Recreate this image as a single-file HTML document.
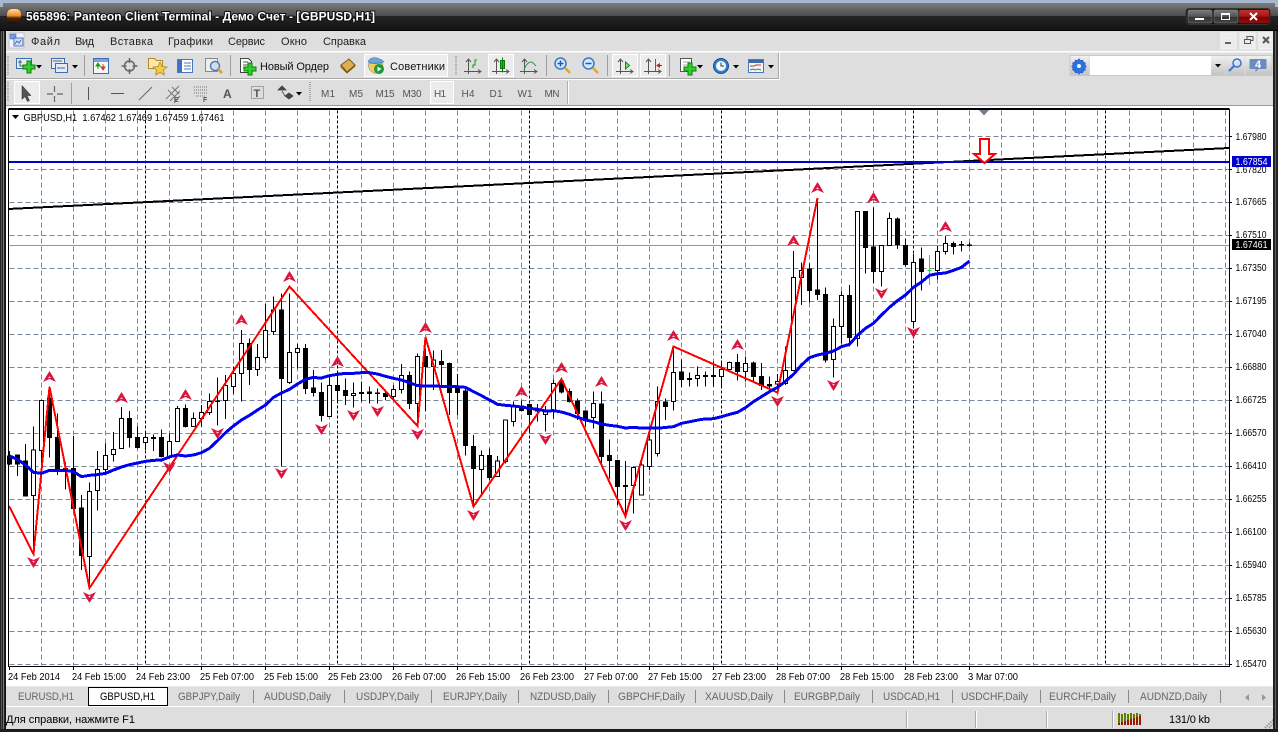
<!DOCTYPE html>
<html><head><meta charset="utf-8"><title>Panteon Client Terminal</title>
<style>
html,body{margin:0;padding:0;background:#dedede;overflow:hidden}
svg{display:block;position:absolute;left:0;top:0}
text{font-family:"Liberation Sans","Noto Sans CJK SC",sans-serif;font-size:11px;white-space:pre}
.m{fill:#222;font-size:11px}
.a{fill:#000;font-size:10px}
.t{fill:#666;font-size:11px}
.f{fill:#555;font-size:10px;text-anchor:middle}
.c{shape-rendering:crispEdges}
.wk{fill:none;stroke:#000;stroke-width:3}
.bk{fill:#000;stroke:#000;stroke-width:3}
.wh{fill:#fff;stroke:#000;stroke-width:3}
.ma{fill:none;stroke:#0000f0;stroke-width:9;stroke-linejoin:round;shape-rendering:crispEdges}
</style></head><body>
<svg width="1278" height="732" viewBox="0 0 1278 732" xmlns="http://www.w3.org/2000/svg">
<defs>
<linearGradient id="tb" x1="0" y1="0" x2="0" y2="1"><stop offset="0" stop-color="#7c7c7c"/><stop offset="1" stop-color="#4c4c4c"/></linearGradient>
<linearGradient id="tb2" x1="0" y1="0" x2="0" y2="1"><stop offset="0" stop-color="#242424"/><stop offset="1" stop-color="#141414"/></linearGradient>
<linearGradient id="org" x1="0" y1="0" x2="0" y2="1"><stop offset="0" stop-color="#ffe0a0"/><stop offset=".45" stop-color="#f08a20"/><stop offset=".6" stop-color="#552200"/><stop offset="1" stop-color="#111"/></linearGradient>
<linearGradient id="btn" x1="0" y1="0" x2="0" y2="1"><stop offset="0" stop-color="#7a7a7a"/><stop offset=".5" stop-color="#555"/><stop offset=".55" stop-color="#333"/><stop offset="1" stop-color="#444"/></linearGradient>
<linearGradient id="red" x1="0" y1="0" x2="0" y2="1"><stop offset="0" stop-color="#c03030"/><stop offset=".5" stop-color="#a81515"/><stop offset=".55" stop-color="#7a0000"/><stop offset="1" stop-color="#901010"/></linearGradient>
<linearGradient id="sb" x1="0" y1="0" x2="0" y2="1"><stop offset="0" stop-color="#f0f0f0"/><stop offset="1" stop-color="#c4c4c4"/></linearGradient>
<path id="u" d="M0-6L2.500-2L6.500 5L0 2L-6.500 5L-2.500-2zM0-.8L-1.500 1.300L0 .8L1.500 1.300z" fill="#dc143c" fill-rule="evenodd"/>
<path id="d" d="M0 6L2.500 2L6.500-5L0-2L-6.500-5L-2.500 2zM0 .8L-1.500-1.300L0-.8L1.500-1.300z" fill="#dc143c" fill-rule="evenodd"/>
<path id="car" d="M0 0h6l-3 3.500z" fill="#000"/>
<path id="pl" d="M-2-6h4v4h4v4h-4v4h-4v-4h-4v-4h4z" fill="#2fd02f" stroke="#0d7d0d" stroke-width="1"/>
</defs>

<!-- window base -->
<rect width="1278" height="732" fill="#dedede"/>
<rect width="1278" height="3" fill="#a6b8d0"/>
<rect y="3" width="1278" height="13" fill="url(#tb)"/>
<rect y="16" width="1278" height="14" fill="url(#tb2)"/>
<rect y="30" width="1278" height="1" fill="#000"/>
<rect x="0" y="0" width="3" height="7" fill="#a6b8d0"/>
<rect x="1275" y="0" width="3" height="7" fill="#a6b8d0"/>

<!-- app icon + title -->
<rect x="7" y="9" width="14" height="15" rx="5" fill="url(#org)"/>
<text x="26" y="20.500" textLength="349" font-weight="700" style="font-size:12px;fill:#fff;stroke:#111;stroke-width:2px;paint-order:stroke;font-weight:700">565896: Panteon Client Terminal - Демо Счет - [GBPUSD,H1]</text>

<!-- window buttons -->
<rect x="1186" y="8.500" width="84" height="16" rx="3" fill="#1a1a1a" stroke="#333"/>
<rect x="1188" y="10" width="24" height="13" rx="1.500" fill="url(#btn)" stroke="#8a8a8a" stroke-width=".5"/>
<rect x="1214" y="10" width="24" height="13" rx="1.500" fill="url(#btn)" stroke="#8a8a8a" stroke-width=".5"/>
<rect x="1239" y="10" width="30" height="13" rx="1.500" fill="url(#red)"/>
<rect x="1195" y="18" width="9" height="2" fill="#fff"/>
<rect x="1221.500" y="13.500" width="8" height="6" fill="none" stroke="#fff" stroke-width="1"/><rect x="1221" y="13" width="9" height="2" fill="#fff"/>
<path d="M1250 13l7 7m0-7l-7 7" stroke="#fff" stroke-width="2" fill="none"/>

<!-- menu bar -->
<rect y="31" width="1278" height="20" fill="#dedede"/>
<rect x="9" y="33" width="15" height="15" fill="#eef4ff" stroke="#9aa8c0" stroke-width=".5"/>
<rect x="10" y="34" width="6" height="5" fill="#7d9ad6" stroke="#3a5aa8" stroke-width=".5"/><rect x="14" y="38" width="9" height="8" fill="#cfdcf5" stroke="#3a5aa8" stroke-width=".8"/><path d="M15 44l2-3 2 2 2-3" stroke="#3a5aa8" fill="none" stroke-width=".8"/>
<text class="m" x="31" y="45" textLength="29">Файл</text>
<text class="m" x="75" y="45" textLength="19">Вид</text>
<text class="m" x="110" y="45" textLength="43">Вставка</text>
<text class="m" x="168" y="45" textLength="45">Графики</text>
<text class="m" x="228" y="45" textLength="37">Сервис</text>
<text class="m" x="281" y="45" textLength="26">Окно</text>
<text class="m" x="323" y="45" textLength="43">Справка</text>
<g>
<rect x="1221" y="33" width="15" height="16" fill="#ececec" stroke="#f4f4f4"/><rect x="1225" y="42" width="6" height="2" fill="#666"/>
<rect x="1240" y="33" width="15" height="16" fill="#ececec" stroke="#f4f4f4"/><path d="M1244.500 39.500h6v4h-6zM1247 39v-2.500h6v4h-2" fill="none" stroke="#555"/>
<rect x="1259" y="33" width="15" height="16" fill="#ececec" stroke="#f4f4f4"/><path d="M1263 37l6 6m0-6l-6 6" stroke="#555" stroke-width="2"/>
</g>
<rect y="51" width="1278" height="1.500" fill="#fff"/>

<!-- toolbar 1 -->
<rect x="3" y="53" width="776" height="25" fill="#dedede" stroke="#fff" stroke-width="0"/>
<path d="M3 78.500H778.500V53" fill="none" stroke="#a8a8a8"/><path d="M3 79.500H779.500V53" fill="none" stroke="#fff"/>
<path d="M8 56v19" stroke="#aaa" stroke-width="2" stroke-dasharray="1 1"/>
<path d="M456 56v19" stroke="#aaa" stroke-width="2" stroke-dasharray="1 1"/>
<path d="M84.500 55v21M230.500 55v21M546.500 55v21M607.500 55v21M669.500 55v21" stroke="#a0a0a0" fill="none"/>

<!-- new chart -->
<g>
<rect x="16.500" y="58.500" width="15" height="10" fill="#e4ecfa" stroke="#3c6cb4"/><path d="M20 60v6h8M18 62h4" stroke="#333" fill="none" stroke-width=".8"/>
<use href="#pl" x="29" y="67"/><use href="#car" x="36" y="65"/>
<rect x="51.500" y="58.500" width="13" height="10" fill="#e4ecfa" stroke="#3c6cb4"/><rect x="55.500" y="63.500" width="12" height="9" fill="#e4ecfa" stroke="#3c6cb4"/><path d="M57 68h8M53 61h9" stroke="#333" stroke-width=".8"/>
<use href="#car" x="72" y="65"/>
<!-- market watch -->
<rect x="93.500" y="58.500" width="15" height="15" fill="#f5f7fb" stroke="#3c6cb4"/><rect x="94" y="59" width="14" height="3" fill="#7fa2d8"/><path d="M98 69v-4M96 66l2-3 2 3z" fill="#1a9a1a" stroke="#1a9a1a"/><path d="M103 64v4M101 67l2 3 2-3z" fill="#d04020" stroke="#d04020"/>
<!-- crosshair -->
<circle cx="129.500" cy="66" r="5" fill="none" stroke="#666" stroke-width="1.500"/><path d="M129.500 58v5m0 6v5M121.500 66h5m6 0h5" stroke="#666" stroke-width="1.500"/>
<!-- star folder -->
<path d="M148.500 58.500h6l2 2h6v8h-14z" fill="#ffe9a8" stroke="#b08a30"/><path d="M160 62l2 4.500 5 .5-3.500 3 1 5-4.500-2.500-4.500 2.500 1-5-3.500-3 5-.5z" fill="#f5cc40" stroke="#b08a30" stroke-width=".8"/>
<!-- terminal -->
<rect x="177.500" y="59.500" width="15" height="13" fill="#fff" stroke="#4a78c0"/><rect x="178" y="60" width="4" height="12" fill="#3f72c8"/><path d="M184 63h7M184 66h7M184 69h7" stroke="#4a78c0"/>
<!-- tester -->
<rect x="205.500" y="58.500" width="12" height="13" fill="#eee" stroke="#8a8a8a"/><circle cx="215" cy="66" r="4.500" fill="#cfe0f5" stroke="#5a7ab0" stroke-width="1.500"/><path d="M218 69l4 4" stroke="#d4a030" stroke-width="2.500"/>
<!-- new order -->
<path d="M240.500 58.500h8l3 3v11h-11z" fill="#fff" stroke="#444"/><path d="M243 62h5M243 65h6M243 68h3" stroke="#555"/>
<use href="#pl" x="250" y="69"/>
<text x="260" y="70" textLength="69" style="font-size:11px;fill:#111">Новый Ордер</text>
<!-- book -->
<path d="M341 65l8-6 6 6-8 7z" fill="#e0b050" stroke="#7a5a1a"/><path d="M341 65v2l6 6 8-7v-1" fill="none" stroke="#7a5a1a"/>
<!-- experts pressed -->
<rect x="364.500" y="54.500" width="83" height="22" fill="#ececec" stroke="#fff"/>
<path d="M368 62c1-4 6-5 9-4s6 2 7 4c-3 1-13 2-16 0z" fill="#6aa6d8" stroke="#3a6a9a" stroke-width=".5"/><path d="M369 63c-1 4 0 8 5 10 4 1 8-1 9-4 0-2 0-4-1-6-4 1-9 1-13 0z" fill="#f3cb62" stroke="#8a7030" stroke-width=".5"/>
<circle cx="379" cy="69" r="5" fill="#1b9a3b"/><path d="M377.500 66.500v5l4-2.500z" fill="#fff"/>
<text x="390" y="70" textLength="55" style="font-size:11px;fill:#111">Советники</text>

<!-- chart type -->
<g fill="none" stroke="#555" stroke-width="1">
<path d="M468.500 60v14M466 62l2.500-3 2.500 3M464 71.500h16M478 69.500l3 2-3 2"/>
<path d="M473 68v-3h2v-5h2" stroke="#0a9a0a"/>
</g>
<rect x="488.500" y="54.500" width="25" height="22" fill="#ececec" stroke="#fff"/>
<g fill="none" stroke="#555"><path d="M496.500 60v14M494 62l2.500-3 2.500 3M492 71.500h16M506 69.500l3 2-3 2"/></g>
<rect x="500.500" y="60.500" width="4" height="8" fill="#1ac21a" stroke="#0a7a0a"/><path d="M502.500 57.500v15" stroke="#0a7a0a"/>
<g fill="none" stroke="#555"><path d="M524.500 60v14M522 62l2.500-3 2.500 3M520 71.500h16M534 69.500l3 2-3 2"/></g>
<path d="M524 70c2-6 5-8 7-8s3 2 5 4" fill="none" stroke="#2a9a4a" stroke-width="1"/>

<!-- zoom -->
<g>
<circle cx="560.500" cy="63.500" r="5.500" fill="#d4e6fa" stroke="#3a78c8" stroke-width="1.500"/><path d="M557.500 63.500h6M560.500 60.500v6" stroke="#2a5a9a" stroke-width="1.500"/><path d="M565 68l5 5" stroke="#d8a830" stroke-width="2.500"/>
<circle cx="588.500" cy="63.500" r="5.500" fill="#d4e6fa" stroke="#3a78c8" stroke-width="1.500"/><path d="M585.500 63.500h6" stroke="#2a5a9a" stroke-width="1.500"/><path d="M593 68l5 5" stroke="#d8a830" stroke-width="2.500"/>
</g>
<!-- autoscroll / shift -->
<rect x="612.500" y="54.500" width="25" height="22" fill="#ececec" stroke="#fff"/>
<rect x="640.500" y="54.500" width="25" height="22" fill="#ececec" stroke="#fff"/>
<g fill="none" stroke="#555"><path d="M620.500 60v14M618 62l2.500-3 2.500 3M616 71.500h16M630 69.500l3 2-3 2"/><path d="M648.500 60v14M646 62l2.500-3 2.500 3M644 71.500h16M658 69.500l3 2-3 2"/></g>
<path d="M625.500 62v7l4-3.500z" fill="#8ce08c" stroke="#0a8a0a"/>
<path d="M655.500 59v12" stroke="#3a6aa8" stroke-width="1"/><path d="M656 65.500l4-2.500v2h2v1h-2v2z" fill="#c02020"/>

<!-- 679 group -->
<rect x="680.500" y="58.500" width="11" height="13" fill="#fff" stroke="#555"/><path d="M683 62h7M683 65h7" stroke="#aaa"/>
<use href="#pl" x="690" y="69"/><use href="#car" x="697" y="65"/>
<circle cx="721" cy="66" r="7.500" fill="#2f7fd0" stroke="#16508f"/><circle cx="721" cy="66" r="5" fill="#f4f8ff"/><path d="M721 62.500V66h3" stroke="#333" fill="none"/><use href="#car" x="733" y="65"/>
<rect x="748.500" y="59.500" width="15" height="13" fill="#f4f6fa" stroke="#4a78c0"/><rect x="749" y="60" width="14" height="3" fill="#3a6ab0"/><path d="M750 66h4l2-1h5" stroke="#c04020" fill="none"/><path d="M750 70l3-1 2 1 3-1 3 1" stroke="#2a9a2a" fill="none"/><use href="#car" x="768" y="65"/>
</g>

<!-- right search -->
<rect x="1070" y="55.500" width="202" height="20" fill="#dcdcdc" stroke="#c8c8c8"/>
<rect x="1070.500" y="56" width="19" height="19" fill="url(#sb)"/>
<path d="M1079 58.500l1.500 2 2-.5 1 2 2 1-.5 2 1.500 1.500-1.500 1.500.5 2-2 1-1 2-2-.5-1.500 2-1.500-2-2 .5-1-2-2-1 .5-2-1.500-1.500 1.500-1.500-.5-2 2-1 1-2 2 .5z" fill="#2f6fe0" stroke="#1a4ab0" stroke-width=".5"/><circle cx="1079" cy="66" r="2" fill="#dff"/>
<rect x="1090" y="56" width="121" height="19" fill="#fff"/>
<rect x="1211" y="56" width="14" height="19" fill="url(#sb)"/><use href="#car" x="1215" y="64"/>
<rect x="1225.500" y="56" width="19" height="19" fill="url(#sb)"/>
<circle cx="1237" cy="63" r="4" fill="none" stroke="#3a72d8" stroke-width="1.500"/><path d="M1234 66l-5 5" stroke="#3a72d8" stroke-width="2"/>
<rect x="1245.500" y="56" width="26" height="19" fill="url(#sb)"/>
<path d="M1250.500 59h15a1 1 0 0 1 1 1v8a1 1 0 0 1-1 1h-7l-3 3v-3h-5a1 1 0 0 1-1-1v-8a1 1 0 0 1 1-1z" fill="#6c8cc0"/>
<text x="1255" y="68" style="font-size:11px;font-weight:700;fill:#fff">4</text>

<!-- toolbar 2 -->
<path d="M3 105.500H1278" stroke="#9c9c9c"/>
<path d="M568.500 81v23" stroke="#fff"/><path d="M567.500 81v23" stroke="#b0b0b0"/>
<path d="M8 82v20M310 82v20" stroke="#aaa" stroke-width="2" stroke-dasharray="1 1"/>
<rect x="14.500" y="81.500" width="25" height="22" fill="#ececec" stroke="#fff"/>
<path d="M22 85.500v14l3-3 2.500 5 2-1-2.500-5h4z" fill="#555" stroke="#222" stroke-width=".5"/>
<path d="M54.500 86v6m0 4v6M47 94h6m4 0h6" stroke="#666" stroke-width="1.200" fill="none"/>
<path d="M71.500 83v21" stroke="#a0a0a0"/>
<path d="M88.500 87v13" stroke="#555"/><path d="M111 93.500h13" stroke="#555"/><path d="M139 100l13-13" stroke="#666"/>
<path d="M166 99l13-13M170 101l10-10M174 103l6-7M168 90l8 8M172 87l7 7" stroke="#777" fill="none" stroke-width="1"/><text x="174" y="102" style="font-size:7px;font-weight:700;fill:#555">E</text>
<path d="M194 87h14M194 90h14M194 93h14M196 96h10" stroke="#777" stroke-dasharray="1 1"/><text x="203" y="102" style="font-size:7px;font-weight:700;fill:#555">F</text>
<text x="223" y="98" style="font-size:12px;font-weight:700;fill:#555">A</text>
<rect x="251.500" y="86.500" width="12" height="12" fill="none" stroke="#666" stroke-dasharray="1 1"/><text x="253.500" y="97" style="font-size:11px;font-weight:700;fill:#555">T</text>
<path d="M278 90l4-4 4 4zM285 96l4-3 4 3-4 3zM282 91l3 5" fill="#444" stroke="#444" stroke-width=".8"/><use href="#car" x="296" y="92"/>
<text class="f" x="328" y="97" textLength="14">M1</text>
<text class="f" x="356" y="97" textLength="14">M5</text>
<text class="f" x="385" y="97" textLength="19">M15</text>
<text class="f" x="412" y="97" textLength="19">M30</text>
<rect x="430.500" y="81.500" width="23" height="22" fill="#ececec" stroke="#fff"/>
<text class="f" x="440" y="97" textLength="12">H1</text>
<text class="f" x="468" y="97" textLength="13">H4</text>
<text class="f" x="496" y="97" textLength="13">D1</text>
<text class="f" x="525" y="97" textLength="15">W1</text>
<text class="f" x="552" y="97" textLength="15">MN</text>

<!-- chart -->
<rect x="5" y="106" width="1268" height="581" fill="#fff"/>
<g transform="translate(.5 .5)" fill="none" class="c">
<path stroke="#778899" stroke-dasharray="5 3" d="M9 136H1229M9 169H1229M9 202H1229M9 235H1229M9 268H1229M9 301H1229M9 334H1229M9 367H1229M9 400H1229M9 433H1229M9 466H1229M9 499H1229M9 532H1229M9 565H1229M9 598H1229M9 631H1229M9 664H1229"/>
<path stroke="#778899" stroke-dasharray="5 3" d="M41 110V665M73 110V665M105 110V665M137 110V665M169 110V665M201 110V665M233 110V665M265 110V665M297 110V665M329 110V665M361 110V665M393 110V665M425 110V665M457 110V665M489 110V665M521 110V665M553 110V665M585 110V665M617 110V665M649 110V665M681 110V665M713 110V665M745 110V665M777 110V665M809 110V665M841 110V665M873 110V665M905 110V665M937 110V665M969 110V665M1001 110V665M1033 110V665M1065 110V665M1097 110V665M1129 110V665M1161 110V665M1193 110V665M1225 110V665"/>
<path stroke="#000" stroke-dasharray="3 2" d="M145 110V665M337 110V665M529 110V665M721 110V665M913 110V665M1105 110V665"/>
<path stroke="#8a96a2" d="M9 245H1229"/>
</g>

<!-- candles -->
<g class="c" transform="translate(.17 370) scale(.33333)">
<path class="wk" d="M28 243V285M52 255V318M76 222V380M100 170V550M124 91V310M148 50V262M172 130V315M196 278V358M220 198V415M244 375V600M268 337V655M292 243V422M316 220V310M340 186V275M364 111V236M388 123V233M412 170V235M436 185V240M460 193V243"/>
<path class="bk" d="M22 258H34V282H22zM46 255H58V282H46zM70 273H82V378H70zM142 84H154V203H142zM166 203H178V300H166zM190 295H202V305H190zM214 295H226V415H214zM238 414H250V557H238zM382 145H394V203H382zM406 203H418V233H406zM454 203H466V205H454z"/>
<path class="wh" d="M94 240H106V376H94zM118 91H130V242H118zM262 364H274V560H262zM286 298H298V362H286zM310 256H322V298H310zM334 238H346V253H334zM358 145H370V236H358zM430 203H442V217H430z"/>
</g>
<g class="c" transform="translate(160.17 270) scale(.33333)">
<path class="wk" d="M4 478V563M28 490V565M52 408V515M76 403V472M100 428V470M124 405V470M148 370V435M172 322V467M196 315V447M220 290V372M244 180V395M268 205V345M292 222V318M316 102V268M340 80V195M364 70V590M388 70V342M412 222V296M436 222V372M460 300V380"/>
<path class="bk" d="M-2 503H10V560H-2zM70 415H82V470H70zM166 393H178V395H166zM262 220H274V299H262zM358 120H370V326H358zM430 235H442V356H430zM454 354H466V368H454z"/>
<path class="wh" d="M22 515H34V560H22zM46 415H58V515H46zM94 445H106V470H94zM118 428H130V445H118zM142 395H154V428H142zM190 346H202V392H190zM214 310H226V350H214zM238 220H250V310H238zM286 262H298V298H286zM310 181H322V263H310zM334 120H346V185H334zM382 247H394V338H382zM406 235H418V247H406z"/>
</g>
<g class="c" transform="translate(320.17 330) scale(.33333)">
<path class="wk" d="M4 157V275M28 140V260M52 130V220M76 145V225M100 157V233M124 155V215M148 170V220M172 175V220M196 178V210M220 165V210M244 102V190M268 125V237M292 70V290M316 55V245M340 62V180M364 60V165M388 97V255M412 132V255M436 170V377M460 315V530M484 362V495M508 355V450M532 378V440M556 268V400M580 215V290M604 212V245M628 222V310M652 222V275M676 228V305M700 148V265M724 145V190M748 175V217M772 205V270M796 243V290M820 185V295M844 185V400M868 328V445M892 391V525M916 393V550M940 410V550"/>
<path class="bk" d="M-2 187H10V257H-2zM46 166H58V182H46zM70 181H82V197H70zM118 187H130V190H118zM142 186H154V190H142zM166 189H178V190H166zM190 191H202V199H190zM262 136H274V221H262zM310 80H322V110H310zM358 94H370V104H358zM382 100H394V187H382zM406 174H418V188H406zM430 183H442V347H430zM454 349H466V416H454zM502 376H514V443H502zM598 228H610V242H598zM622 224H634V254H622zM646 240H658V243H646zM718 153H730V186H718zM742 185H754V215H742zM766 213H778V250H766zM790 243H802V265H790zM838 222H850V380H838zM862 376H874V392H862zM886 391H898V470H886zM910 466H922V470H910z"/>
<path class="wh" d="M22 166H34V260H22zM94 190H106V196H94zM214 178H226V199H214zM238 136H250V178H238zM286 80H298V221H286zM334 90H346V110H334zM478 376H490V418H478zM526 393H538V440H526zM550 270H562V395H550zM574 228H586V274H574zM670 240H682V253H670zM694 160H706V240H694zM814 221H826V262H814zM934 412H946V466H934z"/>
</g>
<g class="c" transform="translate(640.17 180) scale(.33333)">
<path class="wk" d="M4 840V945M28 740V870M52 620V830M76 655V720M100 500V692M124 538V622M148 578V620M172 560V620M196 575V620M220 545V620M244 545V625M268 545V570M292 522V602M316 530V605M340 545V605M364 549V630M388 590V640M412 582V640M436 500V615M460 213V571M484 247V375M508 250V367M532 55V360M556 322V548M580 415V593M604 335V490M628 315V500M652 94V500M676 94V280M700 83V310M724 196V320M748 97V196M772 112V207M796 175V260M820 222V440M844 202V332M892 198V298M916 168V224M940 185V224M964 183V215M988 187V200"/>
<path class="bk" d="M70 666H82V680H70zM118 576H130V599H118zM142 595H154V598H142zM190 587H202V589H190zM214 586H226V590H214zM286 547H298V575H286zM334 549H346V590H334zM358 589H370V617H358zM382 614H394V618H382zM502 267H514V332H502zM526 330H538V344H526zM550 343H562V540H550zM622 346H634V473H622zM670 94H682V203H670zM694 201H706V275H694zM766 117H778V194H766zM790 196H802V254H790zM838 237H850V275H838zM934 190H946V200H934zM958 193H970V195H958zM982 195H994V197H982z"/>
<path class="wh" d="M-2 855H10V945H-2zM22 780H34V860H22zM46 665H58V820H46zM94 577H106V664H94zM166 586H178V596H166zM238 568H250V590H238zM262 547H274V568H262zM310 550H322V574H310zM406 605H418V612H406zM430 572H442V610H430zM454 292H466V571H454zM478 271H490V292H478zM574 440H586V538H574zM598 346H610V440H598zM646 94H658V475H646zM718 196H730V274H718zM742 115H754V196H742zM814 247H826V425H814zM886 214H898V272H886zM910 190H922V214H910z"/>
<path d="M868 225V315M862 272H874" fill="none" stroke="#22e022" stroke-width="3"/>
</g>

<!-- horizontal objects -->
<path class="c" d="M8 209L1229 148" fill="none" stroke="#000" stroke-width="2"/>
<rect x="9" y="161" width="1220" height="2" fill="#0000cc"/>

<!-- zigzag -->
<polyline class="c" points="9,506 33.500,554 49.500,387 89.500,588 289.500,286.500 417.500,426 425.500,337 473.500,506.500 561.500,379 625.500,516.500 673.500,346.500 777.500,392.500 817.500,198" fill="none" stroke="#f00" stroke-width="2"/>

<!-- MA -->
<path class="ma" transform="translate(.17 370) scale(.33333)" d="M28 258L52 268 76 285 100 307 124 310 148 301 172 301 196 301 220 305 244 320 268 316 292 314 316 310 340 300 364 291 388 284 412 279 436 274 460 271 484 270"/>
<path class="ma" transform="translate(160.17 270) scale(.33333)" d="M0 572L30 560 52 555 76 558 100 555 124 548 148 535 172 512 196 488 220 468 244 450 268 436 292 420 316 405 340 382 364 369 388 358 412 342 436 328 460 322 484 325"/>
<path class="ma" transform="translate(320.17 330) scale(.33333)" d="M0 145L28 137 52 133 76 130 100 130 124 128 148 128 172 132 196 139 220 145 244 150 268 158 292 167 316 168 340 168 364 169 388 169 412 170 436 172 460 185 484 197 508 210 532 223 556 226 580 228 604 231 628 235 652 238 676 243 700 242 724 246 748 253 772 262 796 270 820 275 844 282 868 286 892 289 916 294 940 292 960 294"/>
<path class="ma" transform="translate(640.17 180) scale(.33333)" d="M0 744L60 744 100 740 124 730 184 718 220 716 244 710 268 703 292 697 316 683 340 665 364 650 388 635 412 622 436 604 460 583 484 555 508 533 532 525 556 520 580 513 604 500 628 493 652 466 676 445 700 430 724 405 748 382 772 362 796 345 820 322 844 306 868 286 892 281 916 279 940 271 964 262 988 243"/>

<!-- arrows -->
<use href="#u" x="49.500" y="377"/><use href="#u" x="121.500" y="398"/><use href="#u" x="185.500" y="395"/><use href="#u" x="241.500" y="320"/><use href="#u" x="289.500" y="277"/><use href="#u" x="337.500" y="362"/><use href="#u" x="425.500" y="328"/><use href="#u" x="521.500" y="392"/><use href="#u" x="561.500" y="368"/><use href="#u" x="601.500" y="382"/><use href="#u" x="673.500" y="336"/><use href="#u" x="737.500" y="345"/><use href="#u" x="793.500" y="241"/><use href="#u" x="817.500" y="188"/><use href="#u" x="873.500" y="198"/><use href="#u" x="945.500" y="227"/>
<use href="#d" x="33.500" y="562"/><use href="#d" x="89.500" y="597"/><use href="#d" x="169.500" y="467"/><use href="#d" x="217.500" y="433"/><use href="#d" x="281.500" y="473"/><use href="#d" x="321.500" y="429"/><use href="#d" x="353.500" y="415"/><use href="#d" x="377.500" y="411"/><use href="#d" x="417.500" y="434"/><use href="#d" x="473.500" y="515"/><use href="#d" x="545.500" y="439"/><use href="#d" x="625.500" y="525"/><use href="#d" x="777.500" y="401"/><use href="#d" x="833.500" y="385"/><use href="#d" x="881.500" y="293"/><use href="#d" x="913.500" y="332"/>

<!-- big arrow -->
<path d="M980 139h9v15h6l-10.500 9-10.500-9h6z" fill="#fff" stroke="#f00" stroke-width="2"/>
<path d="M979 110h10l-5 5.500z" fill="#708090"/>

<!-- frame & legend -->
<rect x="8.500" y="109.500" width="1221" height="557" fill="none" stroke="#000" class="c"/>
<path d="M8.500 108.500H1229.500" stroke="#000" class="c"/>
<path d="M12 115h7l-3.500 4z" fill="#000"/>
<text class="a" x="23.500" y="121" textLength="201" lengthAdjust="spacingAndGlyphs">GBPUSD,H1  1.67462 1.67469 1.67459 1.67461</text>

<!-- price axis -->
<path class="c" stroke="#000" d="M1229 136.500h3M1229 169.500h3M1229 202.500h3M1229 235.500h3M1229 268.500h3M1229 301.500h3M1229 334.500h3M1229 367.500h3M1229 400.500h3M1229 433.500h3M1229 466.500h3M1229 499.500h3M1229 532.500h3M1229 565.500h3M1229 598.500h3M1229 631.500h3M1229 664.500h3"/>
<g class="a">
<text class="a" x="1235.500" y="140" textLength="31" lengthAdjust="spacingAndGlyphs">1.67980</text>
<text class="a" x="1235.500" y="173" textLength="31" lengthAdjust="spacingAndGlyphs">1.67820</text>
<text class="a" x="1235.500" y="205" textLength="31" lengthAdjust="spacingAndGlyphs">1.67665</text>
<text class="a" x="1235.500" y="238" textLength="31" lengthAdjust="spacingAndGlyphs">1.67510</text>
<text class="a" x="1235.500" y="271" textLength="31" lengthAdjust="spacingAndGlyphs">1.67350</text>
<text class="a" x="1235.500" y="304" textLength="31" lengthAdjust="spacingAndGlyphs">1.67195</text>
<text class="a" x="1235.500" y="337" textLength="31" lengthAdjust="spacingAndGlyphs">1.67040</text>
<text class="a" x="1235.500" y="370" textLength="31" lengthAdjust="spacingAndGlyphs">1.66880</text>
<text class="a" x="1235.500" y="403" textLength="31" lengthAdjust="spacingAndGlyphs">1.66725</text>
<text class="a" x="1235.500" y="436" textLength="31" lengthAdjust="spacingAndGlyphs">1.66570</text>
<text class="a" x="1235.500" y="469" textLength="31" lengthAdjust="spacingAndGlyphs">1.66410</text>
<text class="a" x="1235.500" y="502" textLength="31" lengthAdjust="spacingAndGlyphs">1.66255</text>
<text class="a" x="1235.500" y="535" textLength="31" lengthAdjust="spacingAndGlyphs">1.66100</text>
<text class="a" x="1235.500" y="568" textLength="31" lengthAdjust="spacingAndGlyphs">1.65940</text>
<text class="a" x="1235.500" y="601" textLength="31" lengthAdjust="spacingAndGlyphs">1.65785</text>
<text class="a" x="1235.500" y="634" textLength="31" lengthAdjust="spacingAndGlyphs">1.65630</text>
<text class="a" x="1235.500" y="667" textLength="31" lengthAdjust="spacingAndGlyphs">1.65470</text>
</g>
<rect x="1232" y="156" width="39" height="11" fill="#0000cc"/>
<text x="1235.500" y="165" textLength="32" lengthAdjust="spacingAndGlyphs" style="font-size:10px;fill:#fff">1.67854</text>
<rect x="1232" y="239" width="39" height="11" fill="#000"/>
<text x="1235.500" y="248" textLength="32" lengthAdjust="spacingAndGlyphs" style="font-size:10px;fill:#fff">1.67461</text>

<!-- time axis -->
<path class="c" stroke="#000" d="M9.500 666v4M73.500 666v4M137.500 666v4M201.500 666v4M265.500 666v4M329.500 666v4M393.500 666v4M457.500 666v4M521.500 666v4M585.500 666v4M649.500 666v4M713.500 666v4M777.500 666v4M841.500 666v4M905.500 666v4M969.500 666v4"/>
<text class="a" x="8" y="680" textLength="52" lengthAdjust="spacingAndGlyphs">24 Feb 2014</text>
<text class="a" x="72" y="680" textLength="54" lengthAdjust="spacingAndGlyphs">24 Feb 15:00</text>
<text class="a" x="136" y="680" textLength="54" lengthAdjust="spacingAndGlyphs">24 Feb 23:00</text>
<text class="a" x="200" y="680" textLength="54" lengthAdjust="spacingAndGlyphs">25 Feb 07:00</text>
<text class="a" x="264" y="680" textLength="54" lengthAdjust="spacingAndGlyphs">25 Feb 15:00</text>
<text class="a" x="328" y="680" textLength="54" lengthAdjust="spacingAndGlyphs">25 Feb 23:00</text>
<text class="a" x="392" y="680" textLength="54" lengthAdjust="spacingAndGlyphs">26 Feb 07:00</text>
<text class="a" x="456" y="680" textLength="54" lengthAdjust="spacingAndGlyphs">26 Feb 15:00</text>
<text class="a" x="520" y="680" textLength="54" lengthAdjust="spacingAndGlyphs">26 Feb 23:00</text>
<text class="a" x="584" y="680" textLength="54" lengthAdjust="spacingAndGlyphs">27 Feb 07:00</text>
<text class="a" x="648" y="680" textLength="54" lengthAdjust="spacingAndGlyphs">27 Feb 15:00</text>
<text class="a" x="712" y="680" textLength="54" lengthAdjust="spacingAndGlyphs">27 Feb 23:00</text>
<text class="a" x="776" y="680" textLength="54" lengthAdjust="spacingAndGlyphs">28 Feb 07:00</text>
<text class="a" x="840" y="680" textLength="54" lengthAdjust="spacingAndGlyphs">28 Feb 15:00</text>
<text class="a" x="904" y="680" textLength="54" lengthAdjust="spacingAndGlyphs">28 Feb 23:00</text>
<text class="a" x="968" y="680" textLength="50" lengthAdjust="spacingAndGlyphs">3 Mar 07:00</text>

<!-- tabs -->
<rect x="0" y="686" width="1278" height="1" fill="#e8e8e8"/>
<rect x="5" y="687" width="1268" height="20" fill="#dedede"/>
<path d="M5 706.500H1273" stroke="#fff"/>
<path d="M5.500 688v17" stroke="#888"/>
<path d="M88.500 705.500V687.500H167.500V705.500" fill="#fff" stroke="#000"/>
<path d="M88 705.500h80" stroke="#000"/>
<path stroke="#888" d="M253.500 690v13M344.500 690v13M431.500 690v13M518.500 690v13M608.500 690v13M695.500 690v13M784.500 690v13M872.500 690v13M952.500 690v13M1040.500 690v13M1128.500 690v13M1220.500 690v13"/>
<text class="t" x="18" y="700" textLength="56" lengthAdjust="spacingAndGlyphs">EURUSD,H1</text>
<text x="100" y="700" textLength="55" lengthAdjust="spacingAndGlyphs" style="font-size:11px;fill:#000">GBPUSD,H1</text>
<text class="t" x="178" y="700" textLength="62" lengthAdjust="spacingAndGlyphs">GBPJPY,Daily</text>
<text class="t" x="264" y="700" textLength="67" lengthAdjust="spacingAndGlyphs">AUDUSD,Daily</text>
<text class="t" x="356" y="700" textLength="63" lengthAdjust="spacingAndGlyphs">USDJPY,Daily</text>
<text class="t" x="443" y="700" textLength="64" lengthAdjust="spacingAndGlyphs">EURJPY,Daily</text>
<text class="t" x="530" y="700" textLength="66" lengthAdjust="spacingAndGlyphs">NZDUSD,Daily</text>
<text class="t" x="618" y="700" textLength="67" lengthAdjust="spacingAndGlyphs">GBPCHF,Daily</text>
<text class="t" x="705" y="700" textLength="68" lengthAdjust="spacingAndGlyphs">XAUUSD,Daily</text>
<text class="t" x="794" y="700" textLength="66" lengthAdjust="spacingAndGlyphs">EURGBP,Daily</text>
<text class="t" x="883" y="700" textLength="57" lengthAdjust="spacingAndGlyphs">USDCAD,H1</text>
<text class="t" x="961" y="700" textLength="67" lengthAdjust="spacingAndGlyphs">USDCHF,Daily</text>
<text class="t" x="1049" y="700" textLength="67" lengthAdjust="spacingAndGlyphs">EURCHF,Daily</text>
<text class="t" x="1140" y="700" textLength="67" lengthAdjust="spacingAndGlyphs">AUDNZD,Daily</text>
<path d="M1249 694v7l-4-3.500zM1262 694v7l4-3.500z" fill="#999"/>

<!-- status bar -->
<rect x="5" y="708" width="1268" height="21" fill="#dedede"/>
<text x="6" y="723" textLength="129" style="font-size:11px;fill:#000">Для справки, нажмите F1</text>
<path stroke="#fff" d="M907.500 711v17M976.500 711v17M1047.500 711v17M1113.500 711v17"/>
<path stroke="#aaa" d="M906.500 711v17M975.500 711v17M1046.500 711v17M1112.500 711v17"/>
<path class="c" stroke="#5f7d00" stroke-width="2" fill="none" d="M1119 713v10M1122 714v8M1125 713v8M1128 714v6M1131 713v6M1134 714v4M1137 713v4M1140 714v2"/>
<path class="c" stroke="#a01800" stroke-width="2" fill="none" d="M1119 725v-2M1122 725v-3M1125 725v-4M1128 725v-5M1131 725v-6M1134 725v-7M1137 725v-8M1140 725v-9"/>
<text x="1169" y="723" textLength="41" style="font-size:11px;fill:#000">131/0 kb</text>
<path d="M1265 728l9-9M1269 728l5-5" stroke="#999" stroke-width="2" stroke-dasharray="1.500 1" fill="none"/>

<!-- outer dark frame -->
<rect x="0" y="31" width="6" height="701" fill="#222"/>
<rect x="1" y="31" width="1" height="701" fill="#555"/>
<rect x="3" y="31" width="1" height="701" fill="#777"/>
<rect x="5" y="31" width="1" height="701" fill="#111"/>
<rect x="1273" y="31" width="5" height="701" fill="#222"/>
<rect x="1275" y="31" width="1" height="701" fill="#666"/>
<rect x="0" y="729" width="1278" height="3" fill="#1c1c1c"/>
</svg>
</body></html>
